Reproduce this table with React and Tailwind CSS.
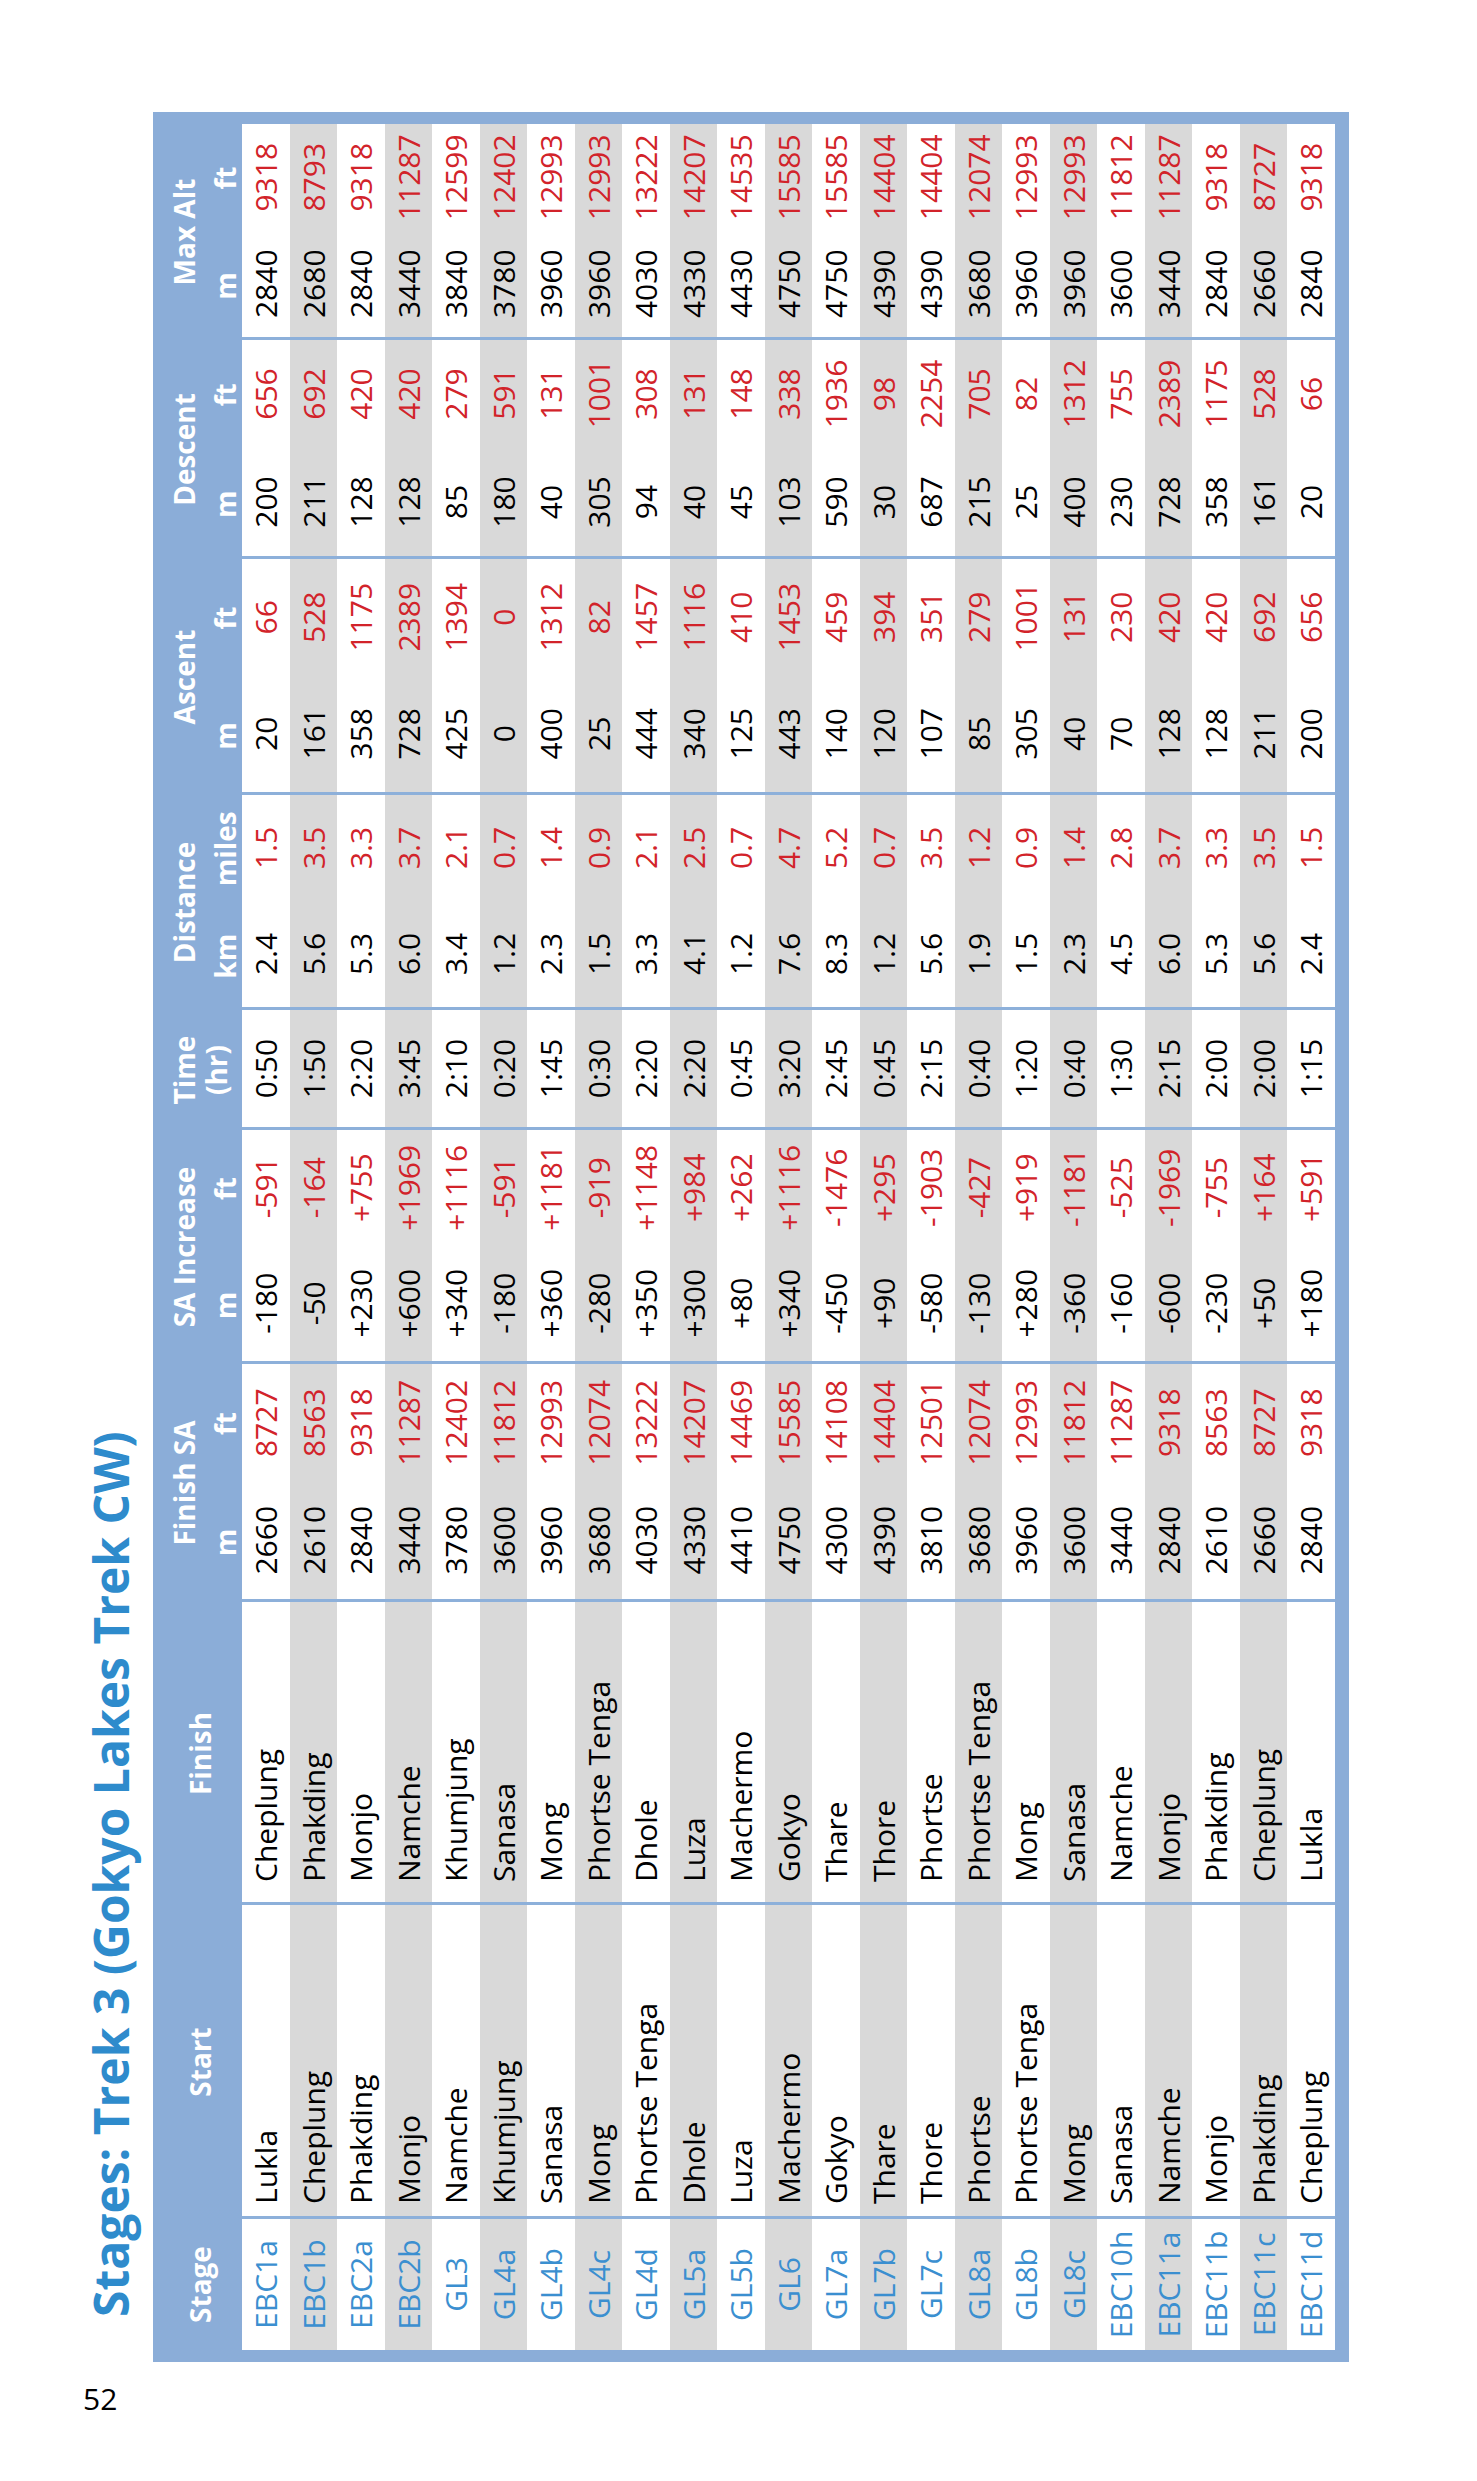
import React from 'react'

// stage, start, finish, finishSA[m,ft], saInc[m,ft], time, dist[km,mi], ascent[m,ft], descent[m,ft], maxAlt[m,ft]
const rows = [
  ['EBC1a', 'Lukla', 'Cheplung', ['2660', '8727'], ['-180', '-591'], '0:50', ['2.4', '1.5'], ['20', '66'], ['200', '656'], ['2840', '9318']],
  ['EBC1b', 'Cheplung', 'Phakding', ['2610', '8563'], ['-50', '-164'], '1:50', ['5.6', '3.5'], ['161', '528'], ['211', '692'], ['2680', '8793']],
  ['EBC2a', 'Phakding', 'Monjo', ['2840', '9318'], ['+230', '+755'], '2:20', ['5.3', '3.3'], ['358', '1175'], ['128', '420'], ['2840', '9318']],
  ['EBC2b', 'Monjo', 'Namche', ['3440', '11287'], ['+600', '+1969'], '3:45', ['6.0', '3.7'], ['728', '2389'], ['128', '420'], ['3440', '11287']],
  ['GL3', 'Namche', 'Khumjung', ['3780', '12402'], ['+340', '+1116'], '2:10', ['3.4', '2.1'], ['425', '1394'], ['85', '279'], ['3840', '12599']],
  ['GL4a', 'Khumjung', 'Sanasa', ['3600', '11812'], ['-180', '-591'], '0:20', ['1.2', '0.7'], ['0', '0'], ['180', '591'], ['3780', '12402']],
  ['GL4b', 'Sanasa', 'Mong', ['3960', '12993'], ['+360', '+1181'], '1:45', ['2.3', '1.4'], ['400', '1312'], ['40', '131'], ['3960', '12993']],
  ['GL4c', 'Mong', 'Phortse Tenga', ['3680', '12074'], ['-280', '-919'], '0:30', ['1.5', '0.9'], ['25', '82'], ['305', '1001'], ['3960', '12993']],
  ['GL4d', 'Phortse Tenga', 'Dhole', ['4030', '13222'], ['+350', '+1148'], '2:20', ['3.3', '2.1'], ['444', '1457'], ['94', '308'], ['4030', '13222']],
  ['GL5a', 'Dhole', 'Luza', ['4330', '14207'], ['+300', '+984'], '2:20', ['4.1', '2.5'], ['340', '1116'], ['40', '131'], ['4330', '14207']],
  ['GL5b', 'Luza', 'Machermo', ['4410', '14469'], ['+80', '+262'], '0:45', ['1.2', '0.7'], ['125', '410'], ['45', '148'], ['4430', '14535']],
  ['GL6', 'Machermo', 'Gokyo', ['4750', '15585'], ['+340', '+1116'], '3:20', ['7.6', '4.7'], ['443', '1453'], ['103', '338'], ['4750', '15585']],
  ['GL7a', 'Gokyo', 'Thare', ['4300', '14108'], ['-450', '-1476'], '2:45', ['8.3', '5.2'], ['140', '459'], ['590', '1936'], ['4750', '15585']],
  ['GL7b', 'Thare', 'Thore', ['4390', '14404'], ['+90', '+295'], '0:45', ['1.2', '0.7'], ['120', '394'], ['30', '98'], ['4390', '14404']],
  ['GL7c', 'Thore', 'Phortse', ['3810', '12501'], ['-580', '-1903'], '2:15', ['5.6', '3.5'], ['107', '351'], ['687', '2254'], ['4390', '14404']],
  ['GL8a', 'Phortse', 'Phortse Tenga', ['3680', '12074'], ['-130', '-427'], '0:40', ['1.9', '1.2'], ['85', '279'], ['215', '705'], ['3680', '12074']],
  ['GL8b', 'Phortse Tenga', 'Mong', ['3960', '12993'], ['+280', '+919'], '1:20', ['1.5', '0.9'], ['305', '1001'], ['25', '82'], ['3960', '12993']],
  ['GL8c', 'Mong', 'Sanasa', ['3600', '11812'], ['-360', '-1181'], '0:40', ['2.3', '1.4'], ['40', '131'], ['400', '1312'], ['3960', '12993']],
  ['EBC10h', 'Sanasa', 'Namche', ['3440', '11287'], ['-160', '-525'], '1:30', ['4.5', '2.8'], ['70', '230'], ['230', '755'], ['3600', '11812']],
  ['EBC11a', 'Namche', 'Monjo', ['2840', '9318'], ['-600', '-1969'], '2:15', ['6.0', '3.7'], ['128', '420'], ['728', '2389'], ['3440', '11287']],
  ['EBC11b', 'Monjo', 'Phakding', ['2610', '8563'], ['-230', '-755'], '2:00', ['5.3', '3.3'], ['128', '420'], ['358', '1175'], ['2840', '9318']],
  ['EBC11c', 'Phakding', 'Cheplung', ['2660', '8727'], ['+50', '+164'], '2:00', ['5.6', '3.5'], ['211', '692'], ['161', '528'], ['2660', '8727']],
  ['EBC11d', 'Cheplung', 'Lukla', ['2840', '9318'], ['+180', '+591'], '1:15', ['2.4', '1.5'], ['200', '656'], ['20', '66'], ['2840', '9318']],
]

const cols = 'grid grid-cols-[131px_314px_303px_238px_234px_120px_215px_236px_219px_216px]'
const line = 'border-l-[3px] border-[#8db0da]'

function Pair({ v }) {
  return (
    <div className={`${line} grid grid-cols-2 text-center`}>
      <span className="text-black">{v[0]}</span>
      <span className="text-[#d2232a]">{v[1]}</span>
    </div>
  )
}

function HeadPair({ title, a = 'm', b = 'ft' }) {
  return (
    <div className="flex flex-col items-center pt-[17px]">
      <div className="h-[28px] whitespace-nowrap">{title}</div>
      <div className="grid grid-cols-2 w-full mt-[13px] text-center">
        <span>{a}</span>
        <span>{b}</span>
      </div>
    </div>
  )
}

export default function App() {
  return (
    <div className="w-[1477px] h-[2481px] bg-white pt-[112px] pl-[80px] font-['Open_Sans',sans-serif]">
      {/* rotated sheet: drawn upright, then turned a quarter to the left */}
      <div className="relative w-[1269px] h-[2250px]">
        <div className="absolute top-0 left-0 w-[2250px] h-[1269px] origin-top-left [transform:translateY(2250px)_rotate(-90deg)]">
          <div className="h-[73px] pl-[45px] pt-[7px] text-[48px] leading-none font-bold text-[#2e8bcc] whitespace-nowrap">
            Stages: Trek 3 (Gokyo Lakes Trek CW)
          </div>

          <div className="w-[2250px] h-[1196px] bg-[#8badd8] px-[12px] pb-[14px] flex flex-col">
            {/* header */}
            <div className={`${cols} h-[89px] shrink-0 text-white font-bold text-[28px] leading-[28px]`}>
              <div className="text-center pt-[33px]">Stage</div>
              <div className="text-center pt-[33px]">Start</div>
              <div className="text-center pt-[33px]">Finish</div>
              <HeadPair title="Finish SA" />
              <HeadPair title="SA Increase" />
              <div className="text-center pt-[15px] leading-[32px]">
                <div>Time</div>
                <div>(hr)</div>
              </div>
              <HeadPair title="Distance" a="km" b="miles" />
              <HeadPair title="Ascent" />
              <HeadPair title="Descent" />
              <HeadPair title="Max Alt" />
            </div>

            {/* body */}
            <div className="flex flex-col text-[30px] leading-[47.5px] text-black">
              {rows.map((r, i) => (
                <div key={r[0]} className={`${cols} h-[47.5px] ${i % 2 ? 'bg-[#d9d9d9]' : 'bg-white'}`}>
                  <div className="text-center text-[#3b8fd0] font-medium">{r[0]}</div>
                  <div className={`${line} pl-[12px] whitespace-nowrap`}>{r[1]}</div>
                  <div className={`${line} pl-[20px] whitespace-nowrap`}>{r[2]}</div>
                  <Pair v={r[3]} />
                  <Pair v={r[4]} />
                  <div className={`${line} text-center`}>{r[5]}</div>
                  <Pair v={r[6]} />
                  <Pair v={r[7]} />
                  <Pair v={r[8]} />
                  <Pair v={r[9]} />
                </div>
              ))}
            </div>
          </div>
        </div>
      </div>

      <div className="mt-[22px] ml-[3px] text-[30px] leading-none text-black">52</div>
    </div>
  )
}
